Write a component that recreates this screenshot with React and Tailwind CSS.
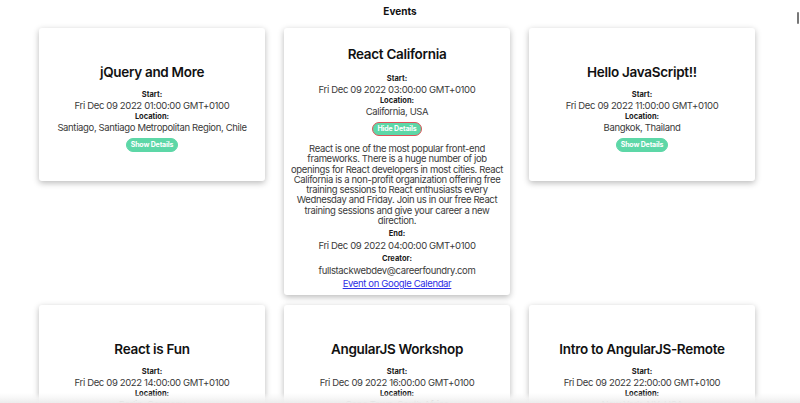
import React from "react";

const events = [
  { title: "jQuery and More", start: "Fri Dec 09 2022 01:00:00 GMT+0100", location: "Santiago, Santiago Metropolitan Region, Chile" },
  {
    title: "React California",
    start: "Fri Dec 09 2022 03:00:00 GMT+0100",
    location: "California, USA",
    open: true,
    description:
      "React is one of the most popular front-end frameworks. There is a huge number of job openings for React developers in most cities. React California is a non-profit organization offering free training sessions to React enthusiasts every Wednesday and Friday. Join us in our free React training sessions and give your career a new direction.",
    end: "Fri Dec 09 2022 04:00:00 GMT+0100",
    creator: "fullstackwebdev@careerfoundry.com",
  },
  { title: "Hello JavaScript!!", start: "Fri Dec 09 2022 11:00:00 GMT+0100", location: "Bangkok, Thailand" },
  { title: "React is Fun", start: "Fri Dec 09 2022 14:00:00 GMT+0100", location: "Berlin, Germany" },
  { title: "AngularJS Workshop", start: "Fri Dec 09 2022 16:00:00 GMT+0100", location: "Cape Town, South Africa" },
  { title: "Intro to AngularJS-Remote", start: "Fri Dec 09 2022 22:00:00 GMT+0100", location: "New York, NY, USA" },
];

const body = "text-[9.5px] tracking-[-0.35px] text-[#3a3a3a]";
const label = "text-[7.5px] font-bold text-[#1a1a1a]";

function Card({ e }) {
  return (
    <div
      className={
        "bg-white rounded-[3px] shadow-[0_2px_6px_rgba(0,0,0,0.28)] text-center flex flex-col items-center px-[6px] " +
        (e.open ? "pt-[17px] pb-[5px]" : "pt-[35px] pb-[29px]")
      }
    >
      <h2 className="text-[13.5px] tracking-[-0.3px] leading-[18px] font-semibold text-[#111]">{e.title}</h2>
      <div className={label + " leading-[11px] " + (e.open ? "mt-[10px]" : "mt-[8px]")}>Start:</div>
      <div className={body + " leading-[11px]"}>{e.start}</div>
      <div className={label + " leading-[11px]"}>Location:</div>
      <div className={body + " leading-[11px]"}>{e.location}</div>
      <button
        className={
          "mt-[5px] h-[14px] px-[4px] rounded-full bg-[#5dd7a7] text-white text-[7px] tracking-[-0.15px] font-bold leading-[12px] " +
          (e.open ? "border border-[#e0525a]" : "border border-[#5dd7a7]")
        }
      >
        {e.open ? "Hide Details" : "Show Details"}
      </button>
      {e.open && (
        <>
          <p className={body + " mt-[8px] leading-[10.3px] w-[214px]"}>{e.description}</p>
          <div className={label + " mt-[2px] leading-[12px]"}>End:</div>
          <div className={body + " leading-[12.3px]"}>{e.end}</div>
          <div className={label + " leading-[12px]"}>Creator:</div>
          <div className={body + " leading-[12.3px]"}>{e.creator}</div>
          <a href="#" className="text-[9.5px] tracking-[-0.35px] leading-[13px] text-[#2e2ee6] underline">
            Event on Google Calendar
          </a>
        </>
      )}
    </div>
  );
}

export default function App() {
  return (
    <div className="bg-white font-['Inter',sans-serif] relative overflow-hidden h-[403px]">
      <h1 className="text-center font-bold text-[10px] leading-[12px] pt-[5px] text-[#111]">Events</h1>
      <div className="grid grid-cols-[226px_226px_226px] gap-x-[19px] gap-y-[10px] pl-[39px] mt-[11px] items-start">
        {events.map((e, i) => (
          <Card key={i} e={e} />
        ))}
      </div>
      <div className="absolute right-[1px] top-[12px] w-[2px] h-[12px] bg-[#777] rounded-[1px]" />
      <div className="absolute left-0 right-0 bottom-0 h-[10px] bg-gradient-to-t from-[#ececec] via-[rgba(245,245,245,0.8)] to-[rgba(255,255,255,0)]" />
    </div>
  );
}
